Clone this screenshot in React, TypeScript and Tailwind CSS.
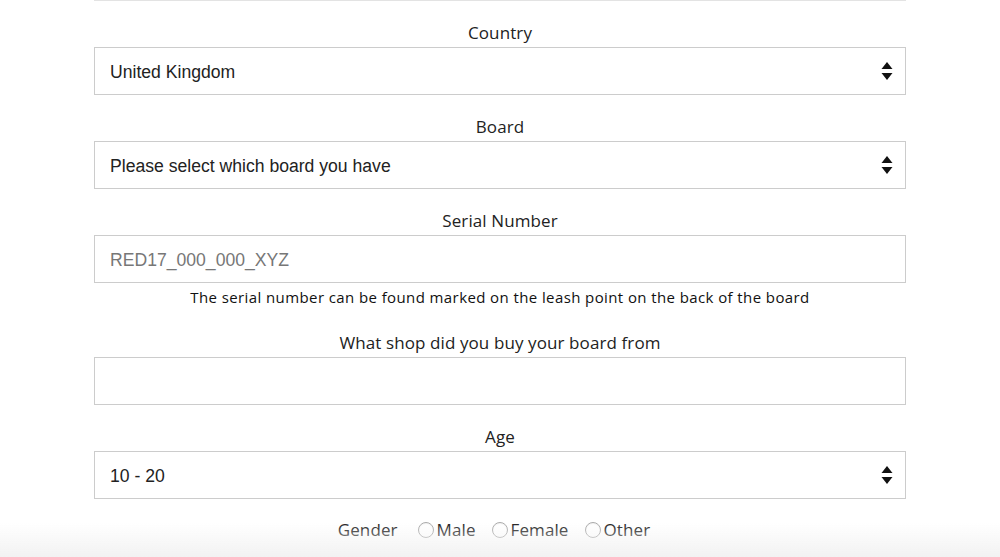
import React from 'react';

const labelCls =
  "block text-center text-[17px] leading-[24px] tracking-[0.1px] text-[#222] mb-[2px] font-['Open_Sans',sans-serif]";
const fieldCls =
  "w-full h-[48px] border border-[#cccccc] bg-white pl-[15px] pr-[40px] pt-[3px] text-[17.6px] text-[#222] font-['Liberation_Sans',Arial,sans-serif] outline-none appearance-none";

function Arrows() {
  return (
    <svg
      className="pointer-events-none absolute right-[13px] top-1/2 -translate-y-1/2"
      width="12"
      height="18"
      viewBox="0 0 12 18"
    >
      <path d="M6 0 L11.5 7 L0.5 7 Z" fill="#111" />
      <path d="M6 18 L11.5 11 L0.5 11 Z" fill="#111" />
    </svg>
  );
}

function SelectField({ label, value, options }: { label: string; value: string; options: string[] }) {
  return (
    <div className="mt-[20px]">
      <label className={labelCls}>{label}</label>
      <div className="relative">
        <select className={fieldCls} defaultValue={value}>
          {options.map((o) => (
            <option key={o}>{o}</option>
          ))}
        </select>
        <Arrows />
      </div>
    </div>
  );
}

function Radio({ label }: { label: string }) {
  return (
    <label className="flex items-center gap-[3px]">
      <span className="w-[16px] h-[16px] rounded-full border border-[#aaaaaa] bg-white shadow-[inset_0_1px_1px_rgba(0,0,0,0.05)]" />
      <span>{label}</span>
    </label>
  );
}

export default function App() {
  return (
    <div className="relative min-h-screen bg-white overflow-hidden">
      <div className="w-[812px] mx-auto">
        <div className="h-[1px] bg-[#e3e3e3]" />

        <SelectField
          label="Country"
          value="United Kingdom"
          options={['United Kingdom', 'Ireland', 'United States', 'France', 'Germany']}
        />
        <SelectField
          label="Board"
          value="Please select which board you have"
          options={['Please select which board you have', 'Ride 10\'6', 'Voyager 12\'6']}
        />

        <div className="mt-[20px]">
          <label className={labelCls}>Serial Number</label>
          <input
            className={fieldCls + ' placeholder:text-[#777]'}
            placeholder="RED17_000_000_XYZ"
          />
          <p className="text-center text-[15px] leading-[20px] tracking-[0.4px] text-[#111] mt-[4px] font-['Open_Sans',sans-serif]">
            The serial number can be found marked on the leash point on the back of the board
          </p>
        </div>

        <div className="mt-[24px]">
          <label className={labelCls}>What shop did you buy your board from</label>
          <input className={fieldCls} />
        </div>

        <div className="mt-[2px]">
          <SelectField label="Age" value="10 - 20" options={['Under 10', '10 - 20', '20 - 30', '30 - 40', '40+']} />
        </div>

        <div className="mt-[19px] pr-[12px] h-[24px] flex items-center justify-center text-[17px] tracking-[0.1px] text-[#222] font-['Open_Sans',sans-serif]">
          <span className="mr-[20px]">Gender</span>
          <div className="flex items-center gap-[16px]">
            <Radio label="Male" />
            <Radio label="Female" />
            <Radio label="Other" />
          </div>
        </div>
        <div className="h-[10px]" />
      </div>

      <div className="pointer-events-none fixed left-0 right-0 bottom-0 h-[34px] bg-gradient-to-b from-white/0 to-[#f2f2f2]" />
    </div>
  );
}
